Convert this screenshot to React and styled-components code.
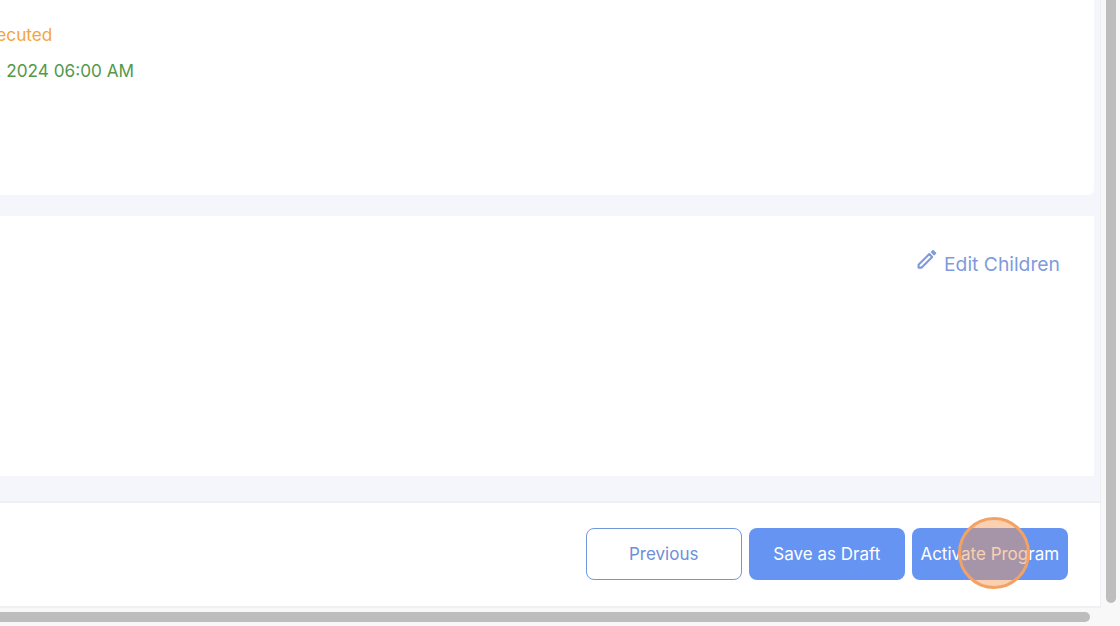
import React from 'react';
import styled, { createGlobalStyle } from 'styled-components';

const GlobalStyle = createGlobalStyle`
  html, body {
    margin: 0;
    height: 100%;
    overflow: hidden;
    background: #fdfdfd;
    font-family: Inter, Lato, sans-serif;
  }
`;

const PencilIcon = () => (
  <svg width="20" height="21" viewBox="0 0 19 19.5" fill="none" stroke="#7f9bdc" strokeWidth="2" strokeLinejoin="round">
    <path d="M1.5 14.8 L11.7 4.6 L14.4 7.3 L4.2 17.5 L1.5 17.5 Z" />
    <path d="M13.6 2.7 L15.2 1.1 L17.9 3.8 L16.3 5.4 Z" fill="#7f9bdc" strokeWidth="1" />
  </svg>
);

const App = () => (
  <Page>
    <GlobalStyle />
    <Main>
      <Content>
        <InfoCard>
          <StatusText>Executed</StatusText>
          <DateText>Jan 12, 2024 06:00 AM</DateText>
        </InfoCard>
        <ChildrenCard>
          <EditLink>
            <PencilIcon />
            <span>Edit Children</span>
          </EditLink>
        </ChildrenCard>
        <Footer>
          <OutlineButton>Previous</OutlineButton>
          <PrimaryButton>Save as Draft</PrimaryButton>
          <PrimaryButton>Activate Program</PrimaryButton>
        </Footer>
      </Content>
      <VerticalTrack>
        <VerticalThumb />
      </VerticalTrack>
    </Main>
    <HorizontalTrack>
      <HorizontalThumb />
    </HorizontalTrack>
    <ClickMarker />
  </Page>
);

const Page = styled.div`
  position: relative;
  width: 1120px;
  height: 626px;
  overflow: hidden;
  display: flex;
  flex-direction: column;
`;

const Main = styled.div`
  flex: 1;
  min-height: 0;
  display: flex;
`;

const Content = styled.div`
  width: 1101px;
  display: flex;
  flex-direction: column;
  background: #f4f6fb;
  border-right: 1px solid #eceef3;
  box-sizing: border-box;
`;

const InfoCard = styled.section`
  height: 195px;
  margin-right: 6px;
  background: #fff;
  border-bottom-right-radius: 6px;
  overflow: hidden;
`;

const StatusText = styled.div`
  margin: 25px 0 0 -23px;
  font-size: 17.2px;
  line-height: 20px;
  color: #f3a53c;
  white-space: nowrap;
`;

const DateText = styled.div`
  margin: 15px 0 0 -55.5px;
  font-size: 17.2px;
  line-height: 22px;
  color: #52994a;
  white-space: nowrap;
`;

const ChildrenCard = styled.section`
  height: 260px;
  margin: 21px 6px 0 0;
  padding: 33px 34px 0 0;
  box-sizing: border-box;
  background: #fff;
  display: flex;
  justify-content: flex-end;
  align-items: flex-start;
`;

const EditLink = styled.div`
  display: flex;
  align-items: flex-start;
  gap: 7px;
  font-size: 19.3px;
  line-height: 30px;
  color: #7f9bdc;
`;

const Footer = styled.footer`
  height: 107px;
  margin-top: 25px;
  padding: 25px 32px 0 0;
  box-sizing: border-box;
  background: #fff;
  border-top: 2px solid #eef0f3;
  border-bottom: 2px solid #eef0f3;
  display: flex;
  justify-content: flex-end;
  align-items: flex-start;
  gap: 6.5px;
`;

const BaseButton = styled.button`
  width: 156.5px;
  height: 52px;
  padding: 0;
  box-sizing: border-box;
  border-radius: 8px;
  font-family: inherit;
  font-size: 17px;
  cursor: pointer;
`;

const OutlineButton = styled(BaseButton)`
  background: #fff;
  border: 1.5px solid #7096dc;
  color: #6d90d8;
`;

const PrimaryButton = styled(BaseButton)`
  background: #6694f3;
  border: none;
  color: #fff;
`;

const VerticalTrack = styled.div`
  flex: 1;
  background: #f8f8f8;
  padding: 0 4px 0 5px;
`;

const VerticalThumb = styled.div`
  height: 603px;
  border-radius: 0 0 5px 5px;
  background: #bdbdbd;
`;

const HorizontalTrack = styled.div`
  height: 18px;
  padding: 4px 0;
  box-sizing: border-box;
  background: #f8f8f8;
`;

const HorizontalThumb = styled.div`
  width: 1090px;
  height: 10px;
  border-radius: 0 5px 5px 0;
  background: #bdbdbd;
`;

const ClickMarker = styled.div`
  position: absolute;
  left: 958px;
  top: 517px;
  width: 72px;
  height: 72px;
  box-sizing: border-box;
  border-radius: 50%;
  border: 3px solid #f3a264;
  background: rgba(245, 150, 80, 0.45);
`;

export default App;
